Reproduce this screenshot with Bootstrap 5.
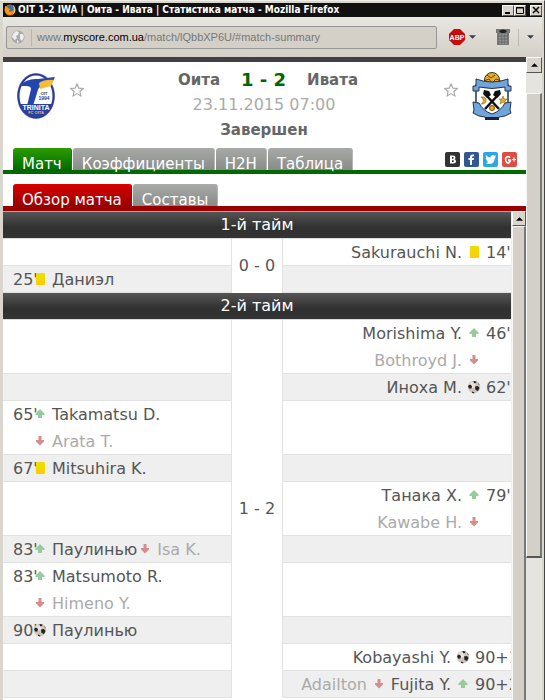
<!DOCTYPE html>
<html lang="ru">
<head>
<meta charset="utf-8">
<meta name="viewport" content="width=device-width, initial-scale=1">
<title>OIT 1-2 IWA | Оита - Ивата | Статистика матча</title>
<link href="https://cdn.jsdelivr.net/npm/bootstrap@5.3.0/dist/css/bootstrap.min.css" rel="stylesheet">
<style>
body{font:16px/26px "DejaVu Sans",Verdana,sans-serif;color:#555;background:#d9d6ce}
button{font:inherit;padding:0;border:0;background:none;color:inherit}
svg{display:block;flex:none}
.window{height:100vh;padding:2px 2px 0 3px;border-top:1px solid #efede8;border-right:1px solid #444;background:#d9d6ce}
.titlebar{height:14px;background:#111;color:#fff;font:bold 10px/14px "DejaVu Sans Condensed","DejaVu Sans",sans-serif;padding-left:1px}
.titlebar span{padding-left:2px}
.winbtn{width:12px;height:11px;background:#d8d4cc;border:1px solid #fff;border-right-color:#555;border-bottom-color:#555}
.toolbar{height:40px;background:linear-gradient(#e9e7e2,#d3cfc6);padding:0 8px 0 3px}
.toolbar .vr{height:17px;align-self:center}
.address{height:23px;border:1px solid #969696;border-radius:2px;background:#d4d0c8;font:11px/16px "Liberation Sans",sans-serif;color:#777;margin-right:12px}
.address .divide{width:1px;height:17px;background:#b9b5ad;margin:0 5px 0 6px}
.address b{font-weight:400;color:#000}
.strip{height:5px;background:#404040}
.score-head{height:86px;padding:6px 12px 0 11px}
.star{margin-top:15px}
.crest{width:44px;height:50px;margin-top:3px}
.teams{font-size:15px;font-weight:700;line-height:24px;color:#666}
.result{font-size:18px;color:#060;padding:0 21px}
.date{color:#aaa}
.tabs{font-size:15px;padding-left:10px;border-bottom:4px solid #006a00}
.tabs a{height:22px;padding:3px 9px 0;margin-right:1px;color:#fff;text-decoration:none;background:linear-gradient(#a8aaa7,#898b88);border-radius:3px 3px 0 0;border-right:1px solid #b7b7b7}
.tabs .on{background:linear-gradient(#2c9c00,#006a00);border-color:#187a08}
.subtabs{margin-top:10px;border-bottom:5px solid #900}
.subtabs .on{background:linear-gradient(#d90000,#980000);border-color:#a50000}
.social{gap:4px;margin-right:9px}
.timeline{overflow:hidden;border-top:1px solid #aaa}
.timeline table{width:100%;table-layout:fixed;border-collapse:separate;border-spacing:0;background:#fff}
.timeline th{height:27px;padding:0;text-align:center;font-weight:400;color:#fff;background:linear-gradient(#555,#303030 60%,#333);border-bottom:1px solid #ddd}
.timeline td{height:27px;padding:0;border-bottom:1px solid #e2e2e2;vertical-align:top;white-space:nowrap}
.timeline .alt{background:#efefef}
.timeline .mid{vertical-align:middle;text-align:center;border:0 solid #e2e2e2;border-width:0 1px;background:#fff}
.c-mid{width:52px}
.timeline .two{height:54px}
.line{display:flex;align-items:center;height:26px;padding:2px 0 0 10px}
.line+.line{height:27px}
.line.away{justify-content:flex-end;padding-left:0}
.clock{width:19px;flex:none}
.away .clock{width:25px}
.away .added{width:36px}
.line svg{width:16px;margin-top:-2px}
.line svg+span{margin-left:4px}
.away .name{margin-right:4px}
.off{color:#aaa}
.scroll{width:16px;background:#e6e4df}
.inner-scroll{width:15px;border-left:1px solid #eee}
.arrow{height:16px;width:100%;display:grid;place-items:center;background:#d9d6ce;border:1px solid #fff;border-right-color:#555;border-bottom-color:#555}
.inner-scroll .arrow{height:15px}
.thumb{background:#d4d0c8;border:1px solid #f8f8f8;border-right:2px solid #777;border-bottom:2px solid #555}
.inner-scroll .thumb{border-bottom:0}
.track{height:20px}
.long{flex:465 0 0}
.rest{flex:143 0 0}
</style>
<script src="https://cdn.jsdelivr.net/npm/bootstrap@5.3.0/dist/js/bootstrap.bundle.min.js"></script>
</head>
<body>
<svg width="0" height="0" class="position-absolute" aria-hidden="true">
<defs>
<linearGradient id="gold" x2="0" y2="1"><stop stop-color="#ece000"/><stop offset="1" stop-color="#ffcb00"/></linearGradient>
<symbol id="card-y" viewBox="0 0 16 14"><rect x="4" y="1" width="9" height="12" rx="1" fill="url(#gold)"/></symbol>
<symbol id="up" viewBox="0 0 16 14"><path d="M8 2l4.500 4.500V8H10v3H6V8H3.500V6.500z" fill="#98cb9b"/></symbol>
<symbol id="down" viewBox="0 0 16 14"><path d="M6.500 2h3v4H12v1.500L8 11.500 4 7.500V6h2.500z" fill="#d58e8e"/></symbol>
<symbol id="ball" viewBox="0 0 16 14"><circle cx="8" cy="7" r="6.200" fill="#cfc4bd"/><circle cx="6.500" cy="5" r="3" fill="#e8e0da"/><path d="M2 6l2-1.500L6 6l-.5 2.500L3 8.500zM9 6.500L12 6l1.500 2-1.500 3-2.500-1zM7.500 1l3 .5-.5 1.500-2 .2zM6 11.500l2.500 1-.5 1-2-.8z" fill="#222"/><path d="M12 2.500l1.800 2.500-1-.2z" fill="#444"/></symbol>
<symbol id="star" viewBox="0 0 14 14"><path d="M7 1l1.800 4.100 4.500.4-3.400 3 1 4.400L7 10.600l-3.900 2.300 1-4.400-3.400-3 4.500-.4z" fill="#fff" stroke="#aaa" stroke-width="1.200"/></symbol>
<symbol id="tri-up" viewBox="0 0 8 4"><path d="M4 0l4 4H0z"/></symbol>
<symbol id="tri-down" viewBox="0 0 8 4"><path d="M0 0h8L4 4z" fill="#34404d"/></symbol>
</defs>
</svg>
<div class="window d-flex flex-column overflow-hidden">
  <header class="titlebar d-flex align-items-center flex-shrink-0">
    <svg width="12" height="12" viewBox="0 0 12 12"><circle cx="6" cy="6" r="5.500" fill="#e66000"/><circle cx="6.500" cy="5" r="3.800" fill="#3672b9"/><path d="M1 2q2 0 3 2l2 1-1 2q2 2 5-1-1 5-5 5Q0 10 1 2z" fill="#ff9500"/><path d="M9 1q3 3 2 7-1 2-3 3 3-4 1-10z" fill="#ffcb00"/></svg>
    <span class="flex-fill text-nowrap overflow-hidden">OIT 1-2 IWA | Оита - Ивата | Статистика матча - Mozilla Firefox</span>
    <button class="winbtn" aria-label="Свернуть"><svg width="10" height="9"><path d="M2 7h5" stroke="#000" stroke-width="2"/></svg></button>
    <button class="winbtn" aria-label="Развернуть"><svg width="10" height="9"><path d="M1.500 1.500h7v6h-7zM1 2h8" fill="none" stroke="#000"/></svg></button>
    <button class="winbtn ms-1" aria-label="Закрыть"><svg width="10" height="9"><path d="M2 1l6 6M8 1L2 7" stroke="#000" stroke-width="1.500"/></svg></button>
  </header>
  <div class="toolbar d-flex align-items-center flex-shrink-0">
    <div class="address d-flex align-items-center flex-fill ps-1">
      <svg width="14" height="14" viewBox="0 0 14 14"><circle cx="7" cy="7" r="6.500" fill="#aaa"/><path d="M2 4l3-3 3 1-1 3-2 1 1 2-2 2-3-3zM9 4l3 0 1 3-2 4-2-2zM6 10l2 2-2 1z" fill="#eee"/></svg>
      <span class="divide"></span><span class="text-nowrap">www.<b>myscore.com.ua</b>/match/lQbbXP6U/#match-summary</span>
    </div>
    <button class="d-flex align-items-center gap-1" aria-label="Adblock Plus">
      <svg width="16" height="16" viewBox="0 0 16 16"><path d="M5 0h6l5 5v6l-5 5H5l-5-5V5z" fill="#c70d0c"/><text x="8" y="11" text-anchor="middle" font-family="Liberation Sans" font-weight="bold" font-size="7" fill="#fff">ABP</text></svg>
      <svg width="7" height="4"><use href="#tri-down"/></svg>
    </button>
    <button class="ms-3 me-2 ps-1" aria-label="Панель"><svg width="14" height="18" viewBox="0 0 14 18"><path d="M0 1h14v4h-1v12H1V5H0z" fill="#777"/><path d="M3 3q4-3 8 0l-2 2H5z" fill="#222"/><path d="M4 6v10M7 6v10M10 6v10" stroke="#aaa"/><path d="M2 8h10M2 11h10M2 14h10" stroke="#666"/></svg></button>
    <span class="vr"></span>
    <button class="ms-2" aria-label="Меню"><svg width="7" height="4"><use href="#tri-down"/></svg></button>
  </div>
  <div class="d-flex flex-fill overflow-hidden">
    <main class="flex-fill d-flex flex-column bg-white overflow-hidden">
      <div class="strip flex-shrink-0"></div>
      <section class="score-head d-flex justify-content-between flex-shrink-0">
        <div class="d-flex">
          <svg class="crest" viewBox="0 0 44 50"><ellipse cx="22" cy="25" rx="19" ry="23" fill="#8d92b8"/><ellipse cx="22" cy="25" rx="17.500" ry="21.500" fill="#fff" stroke="#263a96" stroke-width="2"/><path d="M5 15Q13 7 24 8l17-2-3 6-10 3q-4 1-5 7l-4 13h-6l4-17q0-3-5-3H5z" fill="#2445ad"/><path d="M25 12q6-4 15-3l-3 6-11 3z" fill="#f4bd35"/><path d="M5 33h34q-4 13-17 13T5 33z" fill="#2941a2"/><g font-family="Liberation Sans" font-weight="bold" text-anchor="middle"><text x="30" y="24" font-size="4" fill="#333">OIT</text><text x="30" y="29" font-size="5" fill="#2941a2">1994</text><text x="22" y="39" font-size="7" fill="#fff">TRINITA</text><text x="22" y="43" font-size="4" fill="#f4bd35">FC OITA</text></g></svg>
          <button class="star ms-2 ps-1 align-self-start" aria-label="Избранное"><svg width="14" height="14"><use href="#star"/></svg></button>
        </div>
        <div class="text-center text-nowrap">
          <div class="teams ps-2 d-flex justify-content-center align-items-center"><span>Оита</span><span class="result">1 - 2</span><span>Ивата</span></div>
          <div class="date">23.11.2015 07:00</div>
          <div class="teams">Завершен</div>
        </div>
        <div class="d-flex">
          <button class="star me-2 pe-1 align-self-start" aria-label="Избранное"><svg width="14" height="14"><use href="#star"/></svg></button>
          <svg class="crest" viewBox="0 0 44 50"><circle cx="22" cy="9" r="7.500" fill="#e9ad22" stroke="#26334a"/><path d="M17 4l4 3 4-3M14 10l5-2 3 4 4-4 5 2" stroke="#604000" fill="none"/><path d="M6 14h32v18q-2 9-16 13Q8 41 6 32z" fill="#fff" stroke="#26334a" stroke-width="1.500"/><path d="M3 15h3V8q16 6 32 0v7h3v5h-6v-4q-13 3-26 0v4H3z" fill="#70a5dc" stroke="#26334a"/><path d="M3 31l6 1q4 8 13 11 9-3 13-11l6-1-1 8 1 3q-6 4-12 4l-1 2H16l-1-2Q9 46 3 42l1-3z" fill="#70a5dc" stroke="#26334a"/><path d="M15 23l14 15M29 23L15 38" stroke="#111" stroke-width="2.500"/><path d="M14 19l5 1 2 4-4 3-4-4zM30 19l-5 1-2 4 4 3 4-4z" fill="#111"/><path d="M11 26q5 4 0 7 6 0 5-5-2-3-5-2z" fill="#e9ad22" stroke="#765300" stroke-width=".5"/><path d="M33 25l1 3h3l-2 2 1 3-3-2-3 2 1-3-2-2h3z" fill="#e9ad22" stroke="#765300" stroke-width=".5"/><circle cx="22" cy="37" r="2.500" fill="#e9ad22" stroke="#765300"/><path d="M15 46h14v3H15z" fill="#18243a"/></svg>
        </div>
      </section>
      <nav class="tabs d-flex flex-shrink-0">
        <a class="on" href="#match">Матч</a><a href="#odds">Коэффициенты</a><a href="#h2h">H2H</a><a href="#table">Таблица</a>
        <div class="social d-flex ms-auto align-items-center">
          <svg width="15" height="15" viewBox="0 0 15 15" role="img" aria-label="VK"><rect width="15" height="15" rx="2" fill="#333"/><path d="M5 3.500h3q2.500 0 2.500 2 0 1.500-1.200 1.800Q11 7.500 11 9.300q0 2.200-3 2.200H5zm2 1.500v1.700h.8q.9 0 .9-.9T7.800 5zm0 3.200V10h1q1 0 1-.9t-1-.9z" fill="#fff" fill-rule="evenodd"/></svg>
          <svg width="15" height="15" viewBox="0 0 15 15" role="img" aria-label="Facebook"><rect width="15" height="15" rx="2" fill="#305891"/><path d="M6 13V8H4.500V6H6V5q0-3 4-2.500v1.800q-2-.3-2 .9V6h2l-.3 2H8v5z" fill="#fff"/></svg>
          <svg width="15" height="15" viewBox="0 0 15 15" role="img" aria-label="Twitter"><rect width="15" height="15" rx="2" fill="#2ca8e0"/><path d="M3 3q2 2.500 4.500 2.500Q7.500 3 10 3l1.500.7L13 3.200l-.7 1.500.7.3-1.200 1Q11.500 12 6 12q-2 0-3.500-1 2 0 3-1-1.500-.3-2-1.600h1Q2.500 7.500 2.700 6l1 .2Q2 5 3 3z" fill="#fff"/></svg>
          <svg width="15" height="15" viewBox="0 0 15 15" role="img" aria-label="Google+"><rect width="15" height="15" rx="2" fill="#dc4e41"/><path d="M8 5.500Q6.500 4 4.700 5T4 9t3 1.500T8.300 8H6" fill="none" stroke="#fff" stroke-width="1.600"/><path d="M12 5.500v4M10 7.500h4" stroke="#fff" stroke-width="1.200"/></svg>
        </div>
      </nav>
      <nav class="tabs subtabs d-flex flex-shrink-0"><a class="on" href="#summary">Обзор матча</a><a href="#lineups">Составы</a></nav>
      <div class="d-flex flex-fill overflow-hidden">
        <div class="timeline flex-fill">
          <table>
            <colgroup><col><col class="c-mid"><col></colgroup>
            <tbody>
            <tr><th colspan="3">1-й тайм</th></tr>
            <tr><td></td><td class="mid" rowspan="2">0 - 0</td><td><div class="line away"><span class="name">Sakurauchi N.</span><svg height="14"><use href="#card-y"/></svg><span class="clock">14'</span></div></td></tr>
            <tr><td class="alt"><div class="line"><span class="clock">25'</span><svg height="14"><use href="#card-y"/></svg><span>Даниэл</span></div></td><td class="alt"></td></tr>
            <tr><th colspan="3">2-й тайм</th></tr>
            <tr><td class="two"></td><td class="mid" rowspan="10">1 - 2</td><td class="two"><div class="line away"><span class="name">Morishima Y.</span><svg height="14"><use href="#up"/></svg><span class="clock">46'</span></div><div class="line away off"><span class="name">Bothroyd J.</span><svg height="14"><use href="#down"/></svg><span class="clock"></span></div></td></tr>
            <tr><td class="alt"></td><td class="alt"><div class="line away"><span class="name">Иноха М.</span><svg height="14"><use href="#ball"/></svg><span class="clock">62'</span></div></td></tr>
            <tr><td class="two"><div class="line"><span class="clock">65'</span><svg height="14"><use href="#up"/></svg><span>Takamatsu D.</span></div><div class="line off"><span class="clock"></span><svg height="14"><use href="#down"/></svg><span>Arata T.</span></div></td><td class="two"></td></tr>
            <tr><td class="alt"><div class="line"><span class="clock">67'</span><svg height="14"><use href="#card-y"/></svg><span>Mitsuhira K.</span></div></td><td class="alt"></td></tr>
            <tr><td class="two"></td><td class="two"><div class="line away"><span class="name">Танака Х.</span><svg height="14"><use href="#up"/></svg><span class="clock">79'</span></div><div class="line away off"><span class="name">Kawabe H.</span><svg height="14"><use href="#down"/></svg><span class="clock"></span></div></td></tr>
            <tr><td class="alt"><div class="line"><span class="clock">83'</span><svg height="14"><use href="#up"/></svg><span>Паулинью</span><svg height="14"><use href="#down"/></svg><span class="off">Isa K.</span></div></td><td class="alt"></td></tr>
            <tr><td class="two"><div class="line"><span class="clock">83'</span><svg height="14"><use href="#up"/></svg><span>Matsumoto R.</span></div><div class="line off"><span class="clock"></span><svg height="14"><use href="#down"/></svg><span>Himeno Y.</span></div></td><td class="two"></td></tr>
            <tr><td class="alt"><div class="line"><span class="clock">90'</span><svg height="14"><use href="#ball"/></svg><span>Паулинью</span></div></td><td class="alt"></td></tr>
            <tr><td></td><td><div class="line away"><span class="name">Kobayashi Y.</span><svg height="14"><use href="#ball"/></svg><span class="clock added">90+1'</span></div></td></tr>
            <tr><td class="alt"></td><td class="alt"><div class="line away"><span class="name off">Adailton</span><svg height="14"><use href="#down"/></svg><span class="name">Fujita Y.</span><svg height="14"><use href="#up"/></svg><span class="clock added">90+2'</span></div></td></tr>
            </tbody>
          </table>
        </div>
        <div class="scroll inner-scroll d-flex flex-column flex-shrink-0"><button class="arrow" aria-label="Вверх"><svg width="7" height="4"><use href="#tri-up"/></svg></button><div class="thumb flex-fill"></div></div>
      </div>
    </main>
    <div class="scroll d-flex flex-column flex-shrink-0"><button class="arrow" aria-label="Вверх"><svg width="7" height="4"><use href="#tri-up"/></svg></button><div class="track"></div><div class="thumb long"></div><div class="rest"></div></div>
  </div>
</div>
</body>
</html>
